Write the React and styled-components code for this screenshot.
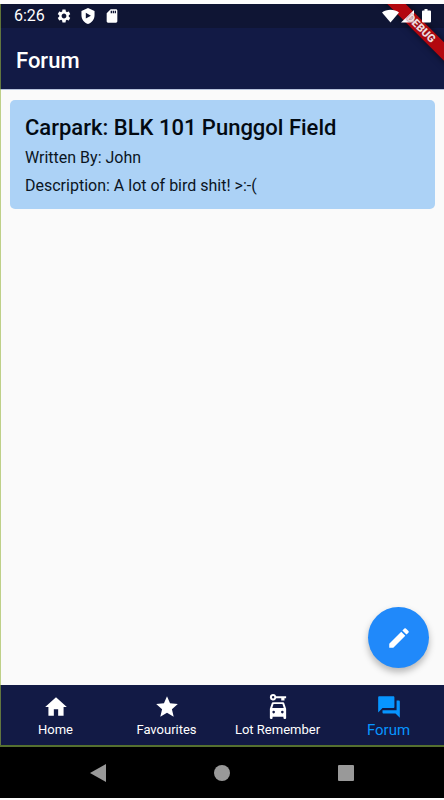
import React from "react";
import styled, { createGlobalStyle, css } from "styled-components";
import {
  MdEdit,
  MdForum,
  MdHome,
  MdSdCard,
  MdSettings,
  MdStar,
} from "react-icons/md";

const GlobalStyle = createGlobalStyle`
  *, *::before, *::after { box-sizing: border-box; }
  body {
    margin: 0;
    background: #fdfdfd;
    font-family: Roboto, "Liberation Sans", sans-serif;
  }
  h1, h2, p { margin: 0; }
  button { border: 0; padding: 0; cursor: pointer; font: inherit; }
`;

const Device = styled.div`
  display: flex;
  flex-direction: column;
  min-height: 100vh;
  padding: 4px 0 2px;
`;

const Screen = styled.div`
  position: relative;
  flex: 1;
  display: flex;
  flex-direction: column;
  overflow: hidden;
  border-bottom: 2px solid #55702f;
  background: #fafafa;

  &::after {
    content: "";
    position: absolute;
    inset: 0;
    border-left: 1px solid rgba(150, 180, 60, 0.6);
    pointer-events: none;
  }
`;

const StatusBar = styled.div`
  display: flex;
  align-items: center;
  justify-content: space-between;
  height: 24px;
  padding: 0 12px 0 14px;
  background: #0f1534;
  color: #fff;
`;

const Clock = styled.time`
  margin-right: 3px;
  font-size: 16px;
  line-height: 24px;
`;

const StatusGroup = styled.div`
  position: relative;
  z-index: 2;
  display: flex;
  align-items: center;
  gap: 8px;
`;

const AppBar = styled.header`
  display: flex;
  align-items: center;
  height: 62px;
  padding: 4px 16px 0;
  border-bottom: 1px solid #b8c3dc;
  background: #121a45;
  color: #fff;
`;

const AppTitle = styled.h1`
  font-size: 22px;
  font-weight: 500;
  line-height: 28px;
`;

const cornerStrip = css`
  position: absolute;
  top: 18px;
  right: -37px;
  width: 120px;
  height: 13px;
  transform: rotate(45deg);
`;

const DebugBand = styled.div`
  ${cornerStrip}
  z-index: 1;
  background: #b3080f;
  box-shadow: 0 0 7px rgba(0, 0, 0, 0.6);
`;

const DebugLabel = styled.div`
  ${cornerStrip}
  z-index: 3;
  color: #f1dadd;
  font-size: 11px;
  font-weight: 900;
  line-height: 13px;
  text-align: center;
  text-shadow: 0 0 2px #7a1c26;
`;

const Feed = styled.main`
  position: relative;
  flex: 1;
  padding: 10px 9px 10px 10px;
`;

const PostCard = styled.article`
  padding: 12px 15px 9px;
  border-radius: 5px;
  background: #acd2f6;
  color: #0b151f;
`;

const PostTitle = styled.h2`
  color: #030a12;
  font-size: 22px;
  font-weight: 500;
  line-height: 32px;
`;

const PostLine = styled.p`
  font-size: 16px;
  line-height: 28px;
`;

const ComposeButton = styled.button`
  position: absolute;
  right: 15px;
  bottom: 17px;
  display: grid;
  place-items: center;
  width: 61px;
  height: 61px;
  border-radius: 50%;
  background: #2089fa;
  box-shadow: 0 4px 7px rgba(0, 0, 0, 0.28);
  color: #fff;
`;

const TabBar = styled.nav`
  display: grid;
  grid-template-columns: repeat(4, 1fr);
  height: 60px;
  background: #121a45;
`;

const Tab = styled.a`
  display: flex;
  flex-direction: column;
  align-items: center;
  padding-top: 9px;
  color: ${({ $active }) => ($active ? "#0795ff" : "#fff")};
  font-size: ${({ $active }) => ($active ? 15 : 13)}px;
  line-height: 20px;
  text-decoration: none;
  white-space: nowrap;
`;

const SystemBar = styled.div`
  display: flex;
  align-items: center;
  justify-content: center;
  gap: 100px;
  height: 51px;
  background: #000;
`;

const SystemButton = styled.button`
  display: grid;
  place-items: center;
  width: 24px;
  height: 24px;
  background: none;
  color: #999;
`;

function ShieldIcon() {
  return (
    <svg width="16" height="16" viewBox="3 1 18 22" aria-hidden="true">
      <path
        fill="currentColor"
        fillRule="evenodd"
        d="M12 1 3 5v6c0 5.500 3.800 10.700 9 12 5.200-1.300 9-6.500 9-12V5ZM9 7.500v8l7-4Z"
      />
    </svg>
  );
}

function SignalIcons() {
  return (
    <svg width="50" height="16" viewBox="0 0 50 16" fill="currentColor" aria-hidden="true">
      <path d="M0 4.500C4.500 .800 12.500 .800 17 4.500L8.500 14.500Z" />
      <path d="M32 2v12.500H19Z" />
      <path d="M42.500 1h3v1.500H48q1 0 1 1v10q0 1-1 1h-7q-1 0-1-1v-10q0-1 1-1h1.500Z" />
    </svg>
  );
}

function CarKeyIcon({ size }) {
  return (
    <svg width={size} height={size} viewBox="0 0 24 24" fill="currentColor" aria-hidden="true">
      <path
        fillRule="evenodd"
        d="M7.500 0a3 3 0 1 0 2.830 4H15v2h3V4h1.500V2h-9.170A3 3 0 0 0 7.500 0Zm0 1.900a1.100 1.100 0 1 1 0 2.200 1.100 1.100 0 0 1 0-2.200Z"
      />
      <path
        fillRule="evenodd"
        d="M7.300 7.500h9.400c.5 0 .9.300 1 .700L19.500 13.500v8.700c0 .5-.4.800-.8.800h-.9c-.5 0-.8-.4-.8-.8V21H7v1.200c0 .5-.4.800-.8.800h-.9c-.5 0-.8-.4-.8-.8V13.500l1.800-5.300c.2-.4.500-.7 1-.7Zm.6 1.800L6.700 13h10.600l-1.200-3.700ZM8 15.500a1.200 1.200 0 1 0 0 2.400 1.200 1.200 0 0 0 0-2.400Zm8 0a1.200 1.200 0 1 0 0 2.400 1.200 1.200 0 0 0 0-2.400Z"
      />
    </svg>
  );
}

function SystemIcon({ shape }) {
  return (
    <svg width="24" height="24" viewBox="0 0 24 24" fill="currentColor" aria-hidden="true">
      {shape === "back" && <path d="M4 12 20 3v18Z" />}
      {shape === "home" && <circle cx="12" cy="12" r="8" />}
      {shape === "recent" && <rect x="4" y="4" width="16" height="16" rx="1" />}
    </svg>
  );
}

const tabs = [
  { label: "Home", Icon: MdHome },
  { label: "Favourites", Icon: MdStar },
  { label: "Lot Remember", Icon: CarKeyIcon },
  { label: "Forum", Icon: MdForum, active: true },
];

const posts = [
  {
    carpark: "BLK 101 Punggol Field",
    author: "John",
    description: "A lot of bird shit! >:-(",
  },
];

export default function App() {
  return (
    <>
      <GlobalStyle />
      <Device>
        <Screen>
          <StatusBar>
            <StatusGroup>
              <Clock>6:26</Clock>
              <MdSettings size={16} />
              <ShieldIcon />
              <MdSdCard size={16} />
            </StatusGroup>
            <StatusGroup>
              <SignalIcons />
            </StatusGroup>
          </StatusBar>
          <AppBar>
            <AppTitle>Forum</AppTitle>
          </AppBar>
          <Feed>
            {posts.map((post) => (
              <PostCard key={post.carpark}>
                <PostTitle>Carpark: {post.carpark}</PostTitle>
                <PostLine>Written By: {post.author}</PostLine>
                <PostLine>Description: {post.description}</PostLine>
              </PostCard>
            ))}
            <ComposeButton type="button" aria-label="Write a post">
              <MdEdit size={26} />
            </ComposeButton>
          </Feed>
          <TabBar>
            {tabs.map(({ label, Icon, active }) => (
              <Tab
                key={label}
                href="#"
                $active={active}
                aria-current={active ? "page" : undefined}
              >
                <Icon size={26} />
                {label}
              </Tab>
            ))}
          </TabBar>
          <DebugBand />
          <DebugLabel>DEBUG</DebugLabel>
        </Screen>
        <SystemBar>
          {["back", "home", "recent"].map((shape) => (
            <SystemButton key={shape} type="button" aria-label={shape}>
              <SystemIcon shape={shape} />
            </SystemButton>
          ))}
        </SystemBar>
      </Device>
    </>
  );
}
